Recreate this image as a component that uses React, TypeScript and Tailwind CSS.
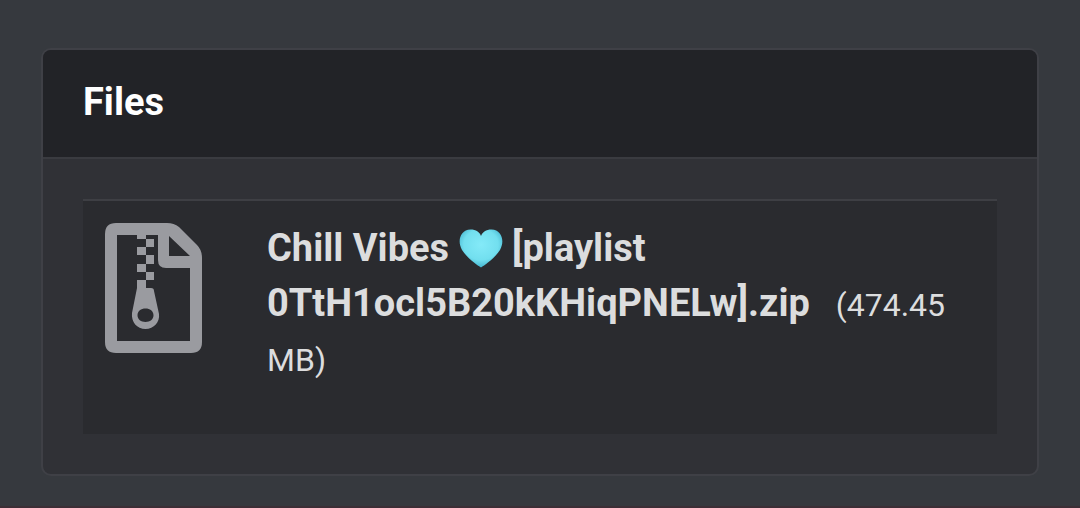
function ZipFileIcon() {
  return (
    <svg viewBox="0 0 97 130" className="h-[130px] w-[97px] shrink-0 fill-[#9a9ba0]" aria-hidden="true">
      <path
        fillRule="evenodd"
        d="M11 0H62Q69 0 74 4L92 22Q97 27 97 35V119Q97 130 86 130H11Q0 130 0 119V11Q0 0 11 0ZM12 12V118H85V45H61Q53 45 53 37V12ZM64 13V33H85Z"
      />
      <path d="M32 11h9v5h-9zM41 16h8v8h-8zM32 24h9v8h-9zM41 32h8v9h-8zM32 41h9v8h-9zM41 49h8v8h-8zM32 57h9v9h-9z" />
      <path
        fillRule="evenodd"
        d="M32 65H46Q49 65 49 68L54 91C55 99 49 106 40.500 106C32 106 26 99 27 90ZM40.500 85.500C36 85.500 32.500 88 32.500 92.300S36 99 40.500 99S48.500 96.500 48.500 92.300S45 85.500 40.500 85.500Z"
      />
    </svg>
  );
}

function BlueHeart() {
  return (
    <svg viewBox="0 0 44 39" role="img" aria-label="light blue heart" className="inline-block h-[39px] w-11 align-[-7px]">
      <defs>
        <radialGradient id="heart-fill" cx="0.5" cy="0.4" r="0.62">
          <stop offset="0" stopColor="#84eaf8" />
          <stop offset="0.65" stopColor="#72dfef" />
          <stop offset="1" stopColor="#3fb0cb" />
        </radialGradient>
      </defs>
      <path
        fill="url(#heart-fill)"
        d="M22 38.500C18 36 8 29 3 21C-2 12 1 1 11.500 0.500C17 0.500 20.500 3 22 7C23.500 3 27 0.500 32.500 0.500C43 1 46 12 41 21C36 29 26 36 22 38.500Z"
      />
    </svg>
  );
}

export default function App() {
  return (
    <main className="min-h-screen border-b-2 border-[#3c2f36] bg-[#36393e] px-[41px] pt-12 pb-[30px] font-['Roboto',sans-serif]">
      <section className="overflow-hidden rounded-[10px] border-2 border-[#3f4046] bg-[#303136]">
        <header className="border-b-2 border-[#3a3b40] bg-[#222327] px-10 pt-6 pb-[27px]">
          <h1 className="text-[38px] leading-[56px] font-bold text-white">Files</h1>
        </header>
        <div className="p-10">
          <article className="flex min-h-[235px] items-start gap-[65px] border-t-2 border-[#3e3f44] bg-[#2a2b2f] px-[22px] pt-5 pb-10 text-[#dcddde]">
            <div className="shrink-0 pt-0.5">
              <ZipFileIcon />
            </div>
            <p className="min-w-0 flex-1 text-[38px] leading-[55px]">
              <a href="#file" className="font-bold">
                Chill Vibes <BlueHeart /> [playlist 0TtH1ocl5B20kKHiqPNELw].zip
              </a>
              <span className="ml-[18px] text-[32px] leading-none"> (474.45 MB)</span>
            </p>
          </article>
        </div>
      </section>
    </main>
  );
}
